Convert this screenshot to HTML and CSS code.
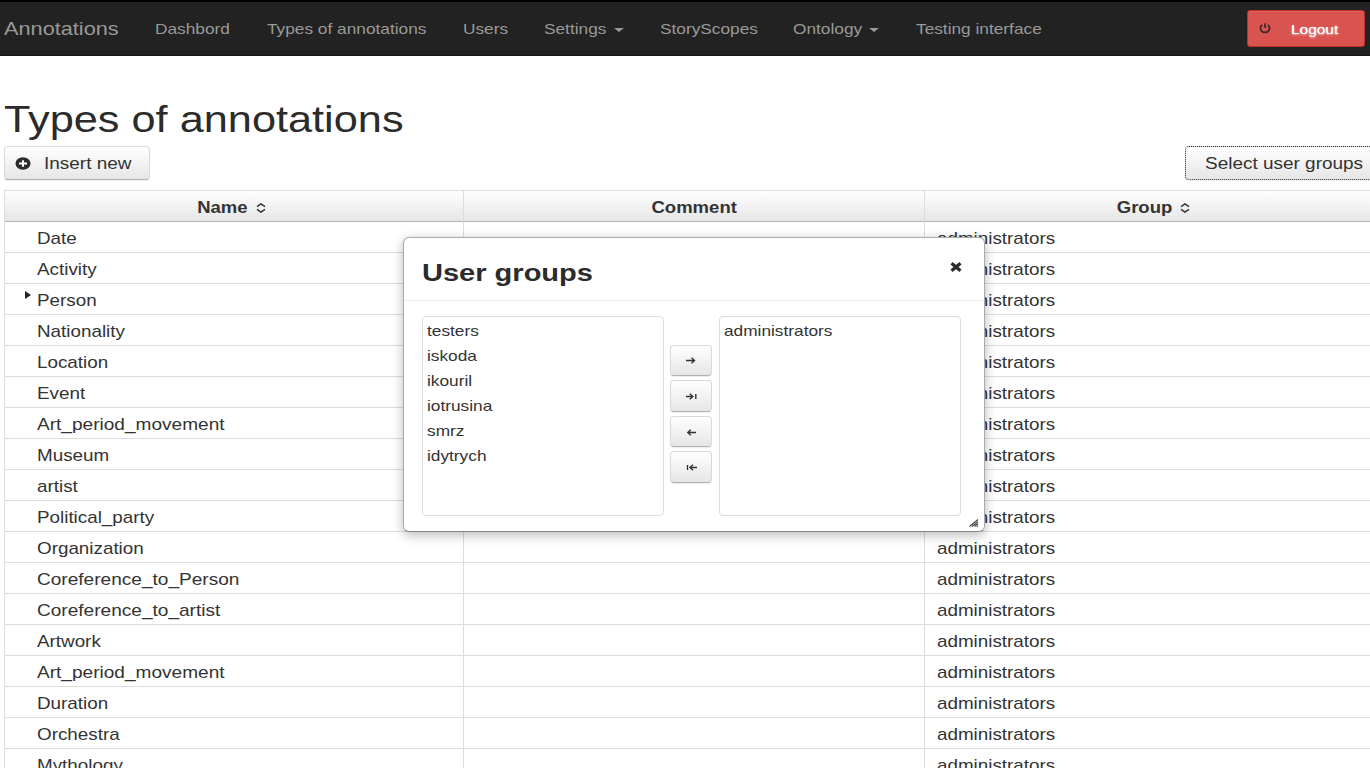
FILE: index.html
```
<!DOCTYPE html>
<html lang="en">
<head>
<meta charset="utf-8">
<title>Types of annotations</title>
<link rel="stylesheet" href="styles.css">
</head>
<body>
<nav class="navbar">
  <div class="nav-links">
    <a class="brand"><span class="t">Annotations</span></a>
    <a><span class="t">Dashbord</span></a>
    <a><span class="t">Types of annotations</span></a>
    <a><span class="t">Users</span></a>
    <a class="drop"><span class="t">Settings</span><i class="caret"></i></a>
    <a><span class="t">StoryScopes</span></a>
    <a class="drop"><span class="t">Ontology</span><i class="caret"></i></a>
    <a><span class="t">Testing interface</span></a>
  </div>
  <button class="logout">
    <svg width="12" height="11" viewBox="0 0 12 11"><path d="M3.2 2A4.6 4.1 0 1 0 8.8 2M6 .2V5" fill="none" stroke="#3a2a2a" stroke-width="1.7"/></svg>
    <span class="t">Logout</span>
  </button>
</nav>
<main>
  <h1><span class="t">Types of annotations</span></h1>
  <div class="toolbar">
    <button class="btn insert">
      <svg width="16" height="13" viewBox="0 0 16 13"><ellipse cx="8" cy="6.5" rx="7.5" ry="6.2" fill="#2b2b2b"/><path d="M8 3.2v6.6M4 6.5h8" stroke="#fff" stroke-width="2"/></svg>
      <span class="t">Insert new</span>
    </button>
    <button class="btn select"><span class="t">Select user groups</span></button>
  </div>
  <div class="table" id="table">
    <div class="row head">
      <div class="name"><span class="t">Name</span><svg class="sort" width="10" height="10" viewBox="0 0 10 10"><path d="M1 3.6L5 .9l4 2.7M1 6.4l4 2.7 4-2.7" fill="none" stroke="#333" stroke-width="1.5"/></svg></div>
      <div><span class="t">Comment</span></div>
      <div class="group"><span class="t">Group</span><svg class="sort" width="10" height="10" viewBox="0 0 10 10"><path d="M1 3.6L5 .9l4 2.7M1 6.4l4 2.7 4-2.7" fill="none" stroke="#333" stroke-width="1.5"/></svg></div>
    </div>
    <div class="row"><div><span class="t">Date</span></div><div></div><div><span class="t">administrators</span></div></div>
    <div class="row"><div><span class="t">Activity</span></div><div></div><div><span class="t">administrators</span></div></div>
    <div class="row"><div class="parent"><i class="expand"></i><span class="t">Person</span></div><div></div><div><span class="t">administrators</span></div></div>
    <div class="row"><div><span class="t">Nationality</span></div><div></div><div><span class="t">administrators</span></div></div>
    <div class="row"><div><span class="t">Location</span></div><div></div><div><span class="t">administrators</span></div></div>
    <div class="row"><div><span class="t">Event</span></div><div></div><div><span class="t">administrators</span></div></div>
    <div class="row"><div><span class="t wide">Art_period_movement</span></div><div></div><div><span class="t">administrators</span></div></div>
    <div class="row"><div><span class="t">Museum</span></div><div></div><div><span class="t">administrators</span></div></div>
    <div class="row"><div><span class="t">artist</span></div><div></div><div><span class="t">administrators</span></div></div>
    <div class="row"><div><span class="t">Political_party</span></div><div></div><div><span class="t">administrators</span></div></div>
    <div class="row"><div><span class="t">Organization</span></div><div></div><div><span class="t">administrators</span></div></div>
    <div class="row"><div><span class="t wide">Coreference_to_Person</span></div><div></div><div><span class="t">administrators</span></div></div>
    <div class="row"><div><span class="t wide">Coreference_to_artist</span></div><div></div><div><span class="t">administrators</span></div></div>
    <div class="row"><div><span class="t">Artwork</span></div><div></div><div><span class="t">administrators</span></div></div>
    <div class="row"><div><span class="t wide">Art_period_movement</span></div><div></div><div><span class="t">administrators</span></div></div>
    <div class="row"><div><span class="t">Duration</span></div><div></div><div><span class="t">administrators</span></div></div>
    <div class="row"><div><span class="t">Orchestra</span></div><div></div><div><span class="t">administrators</span></div></div>
    <div class="row"><div><span class="t">Mythology</span></div><div></div><div><span class="t">administrators</span></div></div>
  </div>
</main>
<section class="dialog">
  <header>
    <h2><span class="t">User groups</span></h2>
    <svg class="close" width="12" height="10" viewBox="0 0 12 10"><path d="M1.5 1.3l9 7.4M10.5 1.3l-9 7.4" stroke="#2b2b2b" stroke-width="3.3"/></svg>
  </header>
  <div class="picker">
    <ul>
      <li><span class="t">testers</span></li>
      <li><span class="t">iskoda</span></li>
      <li><span class="t">ikouril</span></li>
      <li><span class="t">iotrusina</span></li>
      <li><span class="t">smrz</span></li>
      <li><span class="t">idytrych</span></li>
    </ul>
    <div class="moves">
      <button class="btn"><svg width="12" height="8" viewBox="0 0 12 8"><path d="M1 3.5h8.5M6.5 .8L9.5 3.5 6.5 6.2"/></svg></button>
      <button class="btn tall"><svg width="12" height="8" viewBox="0 0 12 8"><path d="M1 4.5h6.500M4.800 1.800L7.800 4.500 4.800 7.200M10.800 2v5"/></svg></button>
      <button class="btn"><svg width="12" height="8" viewBox="0 0 12 8"><path d="M11 4.500H3M5.800 1.800L2.800 4.500l3 2.700"/></svg></button>
      <button class="btn tall"><svg width="12" height="8" viewBox="0 0 12 8"><path d="M12 4.500H5.200M8 1.800L5 4.500 8 7.200M2.500 2v5"/></svg></button>
    </div>
    <ul>
      <li><span class="t">administrators</span></li>
    </ul>
  </div>
  <svg class="grip" width="10" height="8" viewBox="0 0 10 8"><path d="M.5 7.5L9 .5M3 7.5L9 2.7M5.5 7.5L9 4.7M8 7.5l1-.8" stroke="#444" stroke-width="1.1" fill="none"/></svg>
</section>
</body>
</html>
```
FILE: styles.css
```
* { box-sizing: border-box; }
html, body { height: 768px; overflow: hidden; }
body {
  margin: 0;
  background: #fff;
  color: #333;
  font: 15.7px "Liberation Sans", Arial, sans-serif;
}
h1, h2, ul { margin: 0; padding: 0; }
/* Labels are set in a widened sans face */
.t {
  display: inline-block;
  transform: scaleX(1.2);
  transform-origin: 0 50%;
  white-space: nowrap;
}
.wide { transform: scaleX(1.215); }
svg { flex: none; display: block; }

.navbar {
  display: flex;
  justify-content: space-between;
  height: 56px;
  padding: 8px 5px 0 4px;
  background: #222;
  border-top: 2px solid #000;
  border-bottom: 1px solid #151515;
}
.nav-links {
  display: grid;
  grid-template-columns: 151px 112px 196px 81px 116px 133px 123px 130px;
  height: 37px;
  line-height: 39px;
  color: #999;
  font-size: 14.4px;
}
.brand { font-size: 18.1px; line-height: 38px; }
.drop { display: flex; align-items: center; gap: 18px; }
.caret {
  margin-top: 1px;
  border: 5px solid transparent;
  border-top: 4px solid #999;
  border-bottom: 0;
}
.logout {
  display: flex;
  align-items: center;
  gap: 20px;
  width: 118px;
  height: 37px;
  padding: 0 0 0 11px;
  background: #d9534f;
  border: 1px solid #c12e2a;
  border-radius: 3px;
  box-shadow: inset 0 1px 0 #e4605c;
  color: #fff;
  font: 13.3px "Liberation Sans", Arial, sans-serif;
  text-shadow: 0 0 1px rgba(255,255,255,.6), 0 1px 2px rgba(255,255,255,.6);
}
.logout .t { transform: scaleX(1.16); padding-top: 2px; }

main { width: 1384px; padding-left: 4px; }
h1 {
  padding-top: 43px;
  height: 90px;
  font-size: 36.1px;
  font-weight: normal;
  line-height: 41px;
  color: #2b2b2b;
}
.toolbar { display: flex; justify-content: space-between; height: 44px; }
.btn {
  display: flex;
  align-items: center;
  height: 34px;
  padding: 0;
  background: linear-gradient(#fff, #e6e6e6);
  border: 1px solid #d9d9d9;
  border-bottom-color: #b3b3b3;
  border-radius: 4px;
  box-shadow: 0 1px 1px rgba(0,0,0,.08);
  color: #333;
  font: 15.8px "Liberation Sans", Arial, sans-serif;
}
.btn .t { padding-top: 2px; }
.insert { width: 146px; padding-left: 10px; gap: 13px; }
.select { width: 199px; padding-left: 19px; border: 1px dotted #222; }

.table { border: 1px solid #ddd; border-bottom: 0; width: 1381px; }
.row {
  display: grid;
  grid-template-columns: 458px 461px 1fr;
  grid-template-rows: 31px;
  height: 31px;
  line-height: 31px;
}
.row > div { padding-left: 32px; border-bottom: 1px solid #ddd; }
.row > div + div { padding-left: 12px; border-left: 1px solid #ddd; }
.row .t { padding-top: 1px; }
.head { font-weight: bold; height: 31px; }
.row.head > div {
  display: flex;
  align-items: center;
  justify-content: center;
  padding: 0;
  background: linear-gradient(#fff, #e6e6e6);
  border-bottom-color: #b3b3b3;
}
.row.head > .name { padding-right: 5px; }
.row.head > .group { padding-right: 2px; }
.row.head .t { transform-origin: 50% 50%; transform: scaleX(1.18); padding-top: 3px; }
.sort { margin: 3px -4px 0 12px; }
.parent { display: flex; }
.expand {
  width: 0;
  height: 0;
  margin: 7px 6px 0 -12px;
  border: 4px solid transparent;
  border-left: 6px solid #222;
  border-right: 0;
}

/* Floating window above the table */
.dialog {
  position: absolute;
  left: 403px;
  top: 237px;
  width: 582px;
  height: 295px;
  background: #fff;
  border: 1px solid #aaa;
  border-bottom-color: #888;
  border-radius: 6px;
  box-shadow: 0 3px 12px rgba(0,0,0,.28);
}
.dialog header {
  display: flex;
  justify-content: space-between;
  height: 63px;
  padding: 21px 22px 0 18px;
  border-bottom: 1px solid #eee;
}
h2 { font-size: 24.2px; line-height: 28px; color: #2b2b2b; }
.close { margin-top: 3px; }
.picker { display: flex; gap: 6px; padding: 15px 18px; }
.picker ul {
  width: 242px;
  height: 200px;
  padding: 2px 4px;
  border: 1px solid #ddd;
  border-radius: 4px;
  list-style: none;
  font-size: 14.4px;
  line-height: 25px;
}
.moves { display: flex; flex-direction: column; gap: 4px; width: 42px; padding-top: 29px; }
.moves + ul { margin-left: 1px; }
.moves .btn { justify-content: center; height: 31px; }
.moves .tall { height: 32px; }
.moves path { fill: none; stroke: #333; stroke-width: 1.4; }
.grip { position: absolute; right: 5px; bottom: 4px; }
```
